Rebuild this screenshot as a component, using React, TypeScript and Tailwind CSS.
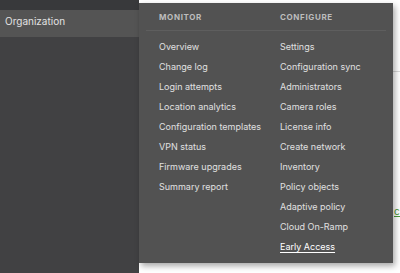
import React from "react";

const monitor = [
  "Overview",
  "Change log",
  "Login attempts",
  "Location analytics",
  "Configuration templates",
  "VPN status",
  "Firmware upgrades",
  "Summary report",
];
const configure = [
  "Settings",
  "Configuration sync",
  "Administrators",
  "Camera roles",
  "License info",
  "Create network",
  "Inventory",
  "Policy objects",
  "Adaptive policy",
  "Cloud On-Ramp",
];

export default function App() {
  return (
    <div
      className="relative flex w-[400px] h-[273px] overflow-hidden bg-white"
      style={{ fontFamily: "Inter, 'Liberation Sans', sans-serif" }}
    >
      <div className="flex flex-col w-[139px] h-full bg-[#414143]">
        <div className="h-[10px] bg-[#38393b]" />
        <div className="h-[27px] bg-[#545454] pl-[5px] pt-[4px] text-[10px] leading-[14px] text-[#e2e2e2]">
          Organization
        </div>
      </div>
      <div className="relative flex-1">
        <div className="absolute left-0 right-0 top-[71px] h-px bg-[#d9d9d9]" />
        <div className="absolute left-[255px] top-[204px] text-[10px] text-[#4a9a3a] underline">cl</div>
        <div className="absolute left-0 top-[3px] w-[254px] h-[260px] bg-[#525252] shadow-[2px_3px_6px_rgba(0,0,0,0.35)] px-[7px] pt-[9px]">
          <div className="flex pl-[13px] h-[18px] items-start text-[8px] leading-[10px] font-bold tracking-[0.08em] text-[#bdbdbd]">
            <div className="w-[121px]">MONITOR</div>
            <div>CONFIGURE</div>
          </div>
          <div className="h-px bg-[#5e5e5e]" />
          <div className="flex pl-[13px] pt-[6px] text-[9px] text-[#e0e0e0]">
            <div className="w-[121px] flex flex-col">
              {monitor.map((m) => (
                <div key={m} className="h-[20px] flex items-center whitespace-nowrap">
                  {m}
                </div>
              ))}
            </div>
            <div className="flex flex-col">
              {configure.map((m) => (
                <div key={m} className="h-[20px] flex items-center whitespace-nowrap">
                  {m}
                </div>
              ))}
              <div className="h-[20px] flex items-center whitespace-nowrap text-white underline underline-offset-2">
                Early Access
              </div>
            </div>
          </div>
        </div>
      </div>
    </div>
  );
}
